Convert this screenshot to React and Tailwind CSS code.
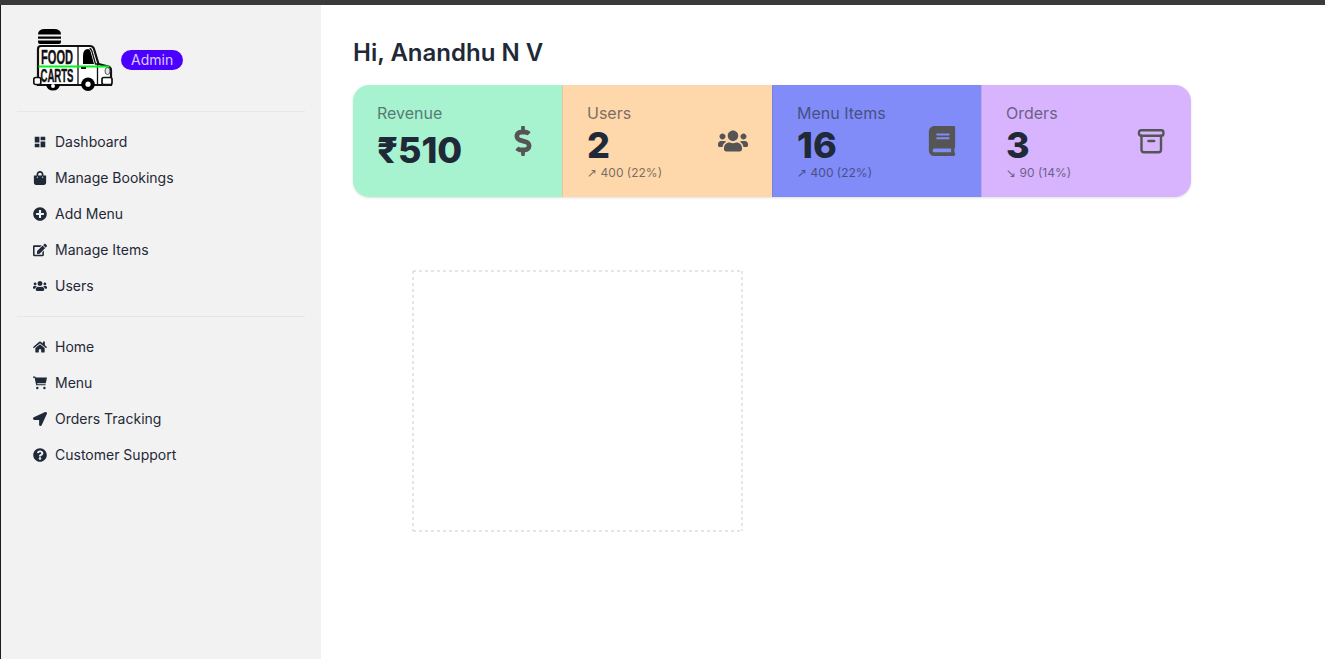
import { MdDashboard } from "react-icons/md";
import {
  FaShoppingBag, FaPlusCircle, FaEdit, FaUsers, FaHome,
  FaLocationArrow, FaQuestionCircle, FaDollarSign, FaBook,
} from "react-icons/fa";

function CartIcon({ className }) {
  return (
    <svg className={className} viewBox="0 0 14 14" fill="currentColor">
      <path d="M0 .6h2.300l.4.800H14l-1.200 5.800H4.100l.2 1h8.300v1.100H3.200L1.600 1.700H0z" />
      <circle cx="4.300" cy="12" r="1.200" />
      <circle cx="11.400" cy="12" r="1.200" />
    </svg>
  );
}

const adminLinks = [
  [MdDashboard, "Dashboard"],
  [FaShoppingBag, "Manage Bookings"],
  [FaPlusCircle, "Add Menu"],
  [FaEdit, "Manage Items"],
  [FaUsers, "Users"],
];
const sharedLinks = [
  [FaHome, "Home"],
  [CartIcon, "Menu"],
  [FaLocationArrow, "Orders Tracking"],
  [FaQuestionCircle, "Customer Support"],
];

function ArchiveIcon() {
  return (
    <svg width="30" height="30" viewBox="0 0 30 30" fill="none" stroke="currentColor" strokeWidth="2.4" strokeLinecap="round" strokeLinejoin="round">
      <rect x="2" y="4.200" width="24.400" height="5.600" rx="2" />
      <path d="M4.500 9.800v14a2.500 2.500 0 0 0 2.500 2.500h14.500a2.500 2.500 0 0 0 2.500-2.500v-14M11.400 15h5.800" />
    </svg>
  );
}

const stats = [
  { title: "Revenue", value: "₹510", bg: "bg-[#a7f3d0]", icon: <FaDollarSign /> },
  { title: "Users", value: "2", arrow: "↗", desc: "400 (22%)", bg: "bg-[#fed7aa]", icon: <FaUsers /> },
  { title: "Menu Items", value: "16", arrow: "↗", desc: "400 (22%)", bg: "bg-[#818cf8]", icon: <FaBook /> },
  { title: "Orders", value: "3", arrow: "↘", desc: "90 (14%)", bg: "bg-[#d8b4fe]", icon: <ArchiveIcon /> },
];

function Logo() {
  return (
    <svg width="80" height="64" viewBox="0 0 80 64" className="shrink-0" aria-label="Food Carts">
      <path d="M5 6.500q0-5.500 7-5.500h9q7 0 7 5.500zM5 8.600h23v2.200H5zM5 12.500h23v1.500q0 2-2 2H7q-2 0-2-2z" fill="#000" />
      <path d="M5 57V21q0-3 3-3h49q3 0 4 3l4.500 15 10 2.500q2.500 1 2.500 4v14.500H5z" fill="#fff" stroke="#111" strokeWidth="2.200" />
      <path d="M13 56.500h14q-1 6-7 6t-7-6z" fill="#000" />
      <path d="M45 18.500V56M64.500 36V56M56.500 20.500q1.500 0 2.500 3l3.500 12.500h4" fill="none" stroke="#111" strokeWidth="1.300" />
      <path d="M50 36V28q0-7 5-7 2 0 2.700 3L61 36z" fill="#000" />
      <path d="M5.500 38.500h71" stroke="#00f51d" strokeWidth="2.200" />
      <path d="M48 40h5" stroke="#000" strokeWidth="1.800" />
      <ellipse cx="74.500" cy="43" rx="2.500" ry="3.500" fill="#e5e5e5" stroke="#555" strokeWidth="1" />
      <circle cx="20" cy="58" r="2" fill="#fff" />
      <g fontFamily="'Liberation Sans Narrow', 'Liberation Sans', sans-serif" fontWeight="700" fill="#111" stroke="#111" strokeWidth=".4">
        <text x="8" y="35.700" fontSize="20" textLength="32" lengthAdjust="spacingAndGlyphs">FOOD</text>
        <text x="7.500" y="54" fontSize="18" textLength="33" lengthAdjust="spacingAndGlyphs">CARTS</text>
      </g>
      <rect x=".8" y="49.500" width="7" height="7" rx="1.800" fill="#fff" stroke="#111" strokeWidth="1.700" />
      <rect x="69" y="49.500" width="10" height="7" rx="1.800" fill="#fff" stroke="#111" strokeWidth="1.700" />
      <circle cx="55" cy="56.200" r="6.800" fill="#000" />
      <circle cx="55" cy="56.200" r="2.600" fill="#fff" />
    </svg>
  );
}

function Links({ items }) {
  return items.map(([Icon, label]) => (
    <li key={label} className="flex h-9 items-center gap-2 px-4 text-sm">
      <Icon className="size-[14px] shrink-0" />
      <span>{label}</span>
    </li>
  ));
}

export default function App() {
  return (
    <div className="flex h-screen flex-col overflow-hidden bg-white font-[Inter,sans-serif] text-[#1f2937]">
      <div className="h-[5px] shrink-0 bg-[#3b3a3b]" />
      <div className="flex min-h-0 flex-1 border-l border-[#1c1b22]">
        <aside className="w-80 shrink-0 bg-[#f2f2f2] p-4">
          <div className="flex items-center gap-2 px-4 pt-[7px]">
            <Logo />
            <span className="flex h-5 items-center rounded-full bg-[#4b00ff] px-[10px] text-sm text-[#d9ccff]">Admin</span>
          </div>
          <ul className="mt-[19px] border-t border-[#e5e6e9] pt-3">
            <Links items={adminLinks} />
          </ul>
          <ul className="mt-3 border-t border-[#e5e6e9] pt-3">
            <Links items={sharedLinks} />
          </ul>
        </aside>
        <main className="flex-1 px-8 pt-8">
          <h2 className="text-2xl font-semibold">Hi, Anandhu N V</h2>
          <section className="mt-4 grid h-28 w-[838px] grid-cols-[209px_210px_209px_210px] overflow-hidden rounded-2xl shadow">
            {stats.map((s) => (
              <div key={s.title} className={`flex items-center justify-between border-[#1f2937]/10 px-6 not-first:border-l ${s.bg}`}>
                <div className="h-20 whitespace-nowrap">
                  <div className="text-base leading-6 opacity-60">{s.title}</div>
                  <div className={s.desc ? "text-4xl leading-10 font-extrabold" : "mt-[5px] text-4xl leading-10 font-extrabold"}>{s.value}</div>
                  {s.desc && (
                    <div className="flex h-4 gap-[3.5px] text-xs leading-4 opacity-60">
                      <span className="font-['DejaVu_Sans',sans-serif]">{s.arrow}</span>
                      <span>{s.desc}</span>
                    </div>
                  )}
                </div>
                <div className="text-3xl text-[#555]">{s.icon}</div>
              </div>
            ))}
          </section>
          <svg className="mt-[73px] ml-[59px]" width="332" height="262" fill="none" stroke="#ccc" strokeDasharray="3 3">
            <path d="M1 1H330M1 261H330M1 1V261M330 1V261" />
          </svg>
        </main>
      </div>
    </div>
  );
}
